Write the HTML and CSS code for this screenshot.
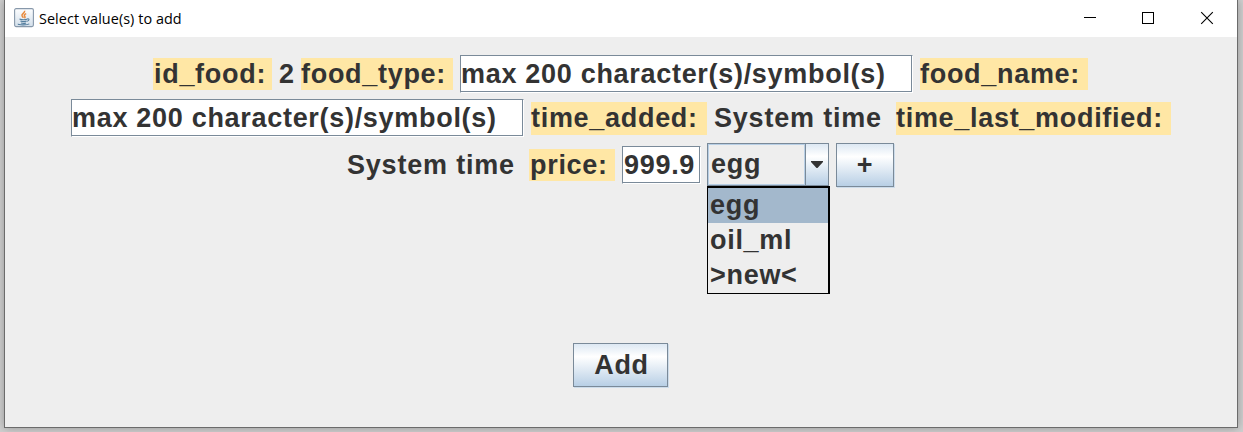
FILE: index.html
```html
<!DOCTYPE html>
<html lang="en">
<head>
<meta charset="utf-8">
<title>Select value(s) to add</title>
<link rel="stylesheet" href="styles.css">
</head>
<body>
<div class="window">
  <header class="titlebar">
    <svg class="java" width="20" height="20" viewBox="0 0 20 20">
      <defs><linearGradient id="g" x1="0" y1="0" x2="0" y2="1"><stop offset="0" stop-color="#fdfeff"/><stop offset="1" stop-color="#d3dfea"/></linearGradient></defs>
      <rect x=".6" y=".6" width="18.8" height="18" rx="1.5" fill="url(#g)" stroke="#8798aa" stroke-width="1.1"/>
      <path d="M10.6 2.8c.8 2-3.6 3.100-2.600 5 .3.800 1 1.200 1.300 2M12.200 5.600c-2 .8-2.300 1.900-1.300 2.900.5.700 0 1.300-.5 1.700" fill="none" stroke="#e88a3d" stroke-width="1.500"/>
      <path d="M5.500 11c2 .8 6 .8 8 0M6.400 13c2 .7 4.600.7 6.200 0M7 15c1.500.5 3.800.5 5 0M13.300 10.800c2.400-.4 2.200 2-.4 2.400M4.300 15.700c-1 1.500 9 1.600 11 .2" fill="none" stroke="#557f9f" stroke-width="1.100"/>
    </svg>
    <span class="caption">Select value(s) to add</span>
    <svg class="controls" width="124" height="14" viewBox="0 0 124 14">
      <path d="M0 6.500h12M58.500 1.500h11v11h-11z" fill="none" stroke="#000" shape-rendering="crispEdges"/>
      <path d="M117.200 1.200l11.600 11.600M128.800 1.200l-11.600 11.600" fill="none" stroke="#000" stroke-width="1.100"/>
    </svg>
  </header>
  <main class="form">
    <div class="row row-one">
      <span class="label inset w-id">id_food:</span>
      <span class="value w-num">2</span>
      <span class="label w-type">food_type:</span>
      <span class="field w-long">max 200 character(s)/symbol(s)</span>
      <span class="label w-name">food_name:</span>
    </div>
    <div class="row row-two">
      <span class="field w-long">max 200 character(s)/symbol(s)</span>
      <span class="label tall w-added">time_added:</span>
      <span class="value w-system">System time</span>
      <span class="label tall w-modified">time_last_modified:</span>
    </div>
    <div class="row row-three">
      <span class="value w-system">System time</span>
      <span class="label inset w-price">price:</span>
      <span class="field w-price-field">999.9</span>
      <div class="combo">
        <span class="combo-value">egg</span>
        <span class="combo-arrow"><svg width="12" height="7" viewBox="0 0 12 7"><path d="M0 0h12v1L6.500 7h-1L0 1z" fill="#333"/></svg></span>
        <ul class="popup">
          <li class="selected">egg</li>
          <li>oil_ml</li>
          <li>&gt;new&lt;</li>
        </ul>
      </div>
      <button class="button plus">+</button>
    </div>
    <button class="button add">Add</button>
  </main>
</div>
</body>
</html>
```
FILE: styles.css
```css
* { box-sizing: border-box; }
body {
  margin: 0;
  width: 1243px;
  height: 432px;
  overflow: hidden;
  background: #d0d0d0;
}
.window {
  width: 1234px;
  height: 428px;
  margin-left: 4px;
  border: 1px solid #6b6b6b;
  border-top: 0;
  background: #eee;
  box-shadow: 0 0 9px rgba(0, 0, 0, .3);
}
.titlebar {
  height: 37px;
  display: flex;
  align-items: center;
  padding: 0 24px 0 9px;
  background: #fff;
}
.java { margin-top: -2px; }
.caption {
  margin-left: 5px;
  font: 14.400px/20px "Open Sans", "Noto Sans", sans-serif;
  letter-spacing: .06px;
  color: #000;
}
.controls { margin-left: auto; margin-right: 5px; margin-top: -1px; overflow: visible; }
.form {
  display: flex;
  flex-direction: column;
  align-items: flex-start;
  font: bold 27px/32px "Liberation Sans", Arial, sans-serif;
  letter-spacing: .700px;
  color: #333;
  white-space: nowrap;
}
.row { display: flex; align-items: center; }
.row-one { height: 38px; margin: 18px 0 0 148px; gap: 7px; }
.row-two { height: 38px; margin: 6px 0 0 66px; gap: 7px; }
.row-three { height: 44px; margin: 6px 0 0 342px; gap: 7px; }
.label { height: 32px; background: #ffe7a5; }
.inset { padding-left: 1px; }
.tall { height: 33px; }
.row-one .label, .row-one .value { margin-top: -1px; }
.w-id { width: 119px; }
.w-num { width: 15px; }
.w-type { width: 152px; }
.w-long { width: 453px; }
.w-name { width: 168px; }
.w-added { width: 176px; }
.w-system { width: 175px; letter-spacing: .800px; }
.w-modified { width: 275px; }
.w-price { width: 86px; }
.w-price-field { width: 79px; margin-right: -1px; }
.field {
  height: 38px;
  padding: 2px 0 0;
  background: #fff;
  border: 1px solid #7a8a99;
  border-right-color: #fff;
  border-bottom-color: #fff;
  box-shadow: inset -1px -1px #7a8a99;
}
.w-price-field { padding-left: 1px; }
.combo {
  position: relative;
  display: flex;
  width: 122px;
  height: 43px;
  align-self: flex-start;
  border: 1px solid #7a8a99;
}
.combo-value {
  width: 97px;
  padding: 3px 0 0 2px;
  border: 1px solid #b8cfe5;
}
.combo-arrow {
  display: flex;
  flex: 1;
  align-items: center;
  justify-content: center;
  border-left: 1px solid #7a8a99;
  background: linear-gradient(#dde8f3, #fff 30%, #b8cfe5);
}
.popup {
  position: absolute;
  left: -1px;
  top: 42px;
  width: 123px;
  height: 108px;
  margin: 0;
  padding: 0;
  list-style: none;
  background: #eee;
  border: 1px solid #000;
  border-width: 2px 2px 1px 1px;
}
.popup li { height: 35px; line-height: 35px; padding-left: 2px; }
.popup .selected { background: #a3b8cc; }
.button {
  height: 44px;
  padding: 0;
  border: 1px solid #7a8a99;
  background: linear-gradient(#dde8f3, #fff 30%, #b8cfe5);
  box-shadow: 1px 1px #cddcea;
  font: inherit;
  letter-spacing: inherit;
  color: #333;
}
.plus { width: 58px; }
.add { width: 95px; margin: 156px 0 0 568px; padding-left: 2px; }
```
